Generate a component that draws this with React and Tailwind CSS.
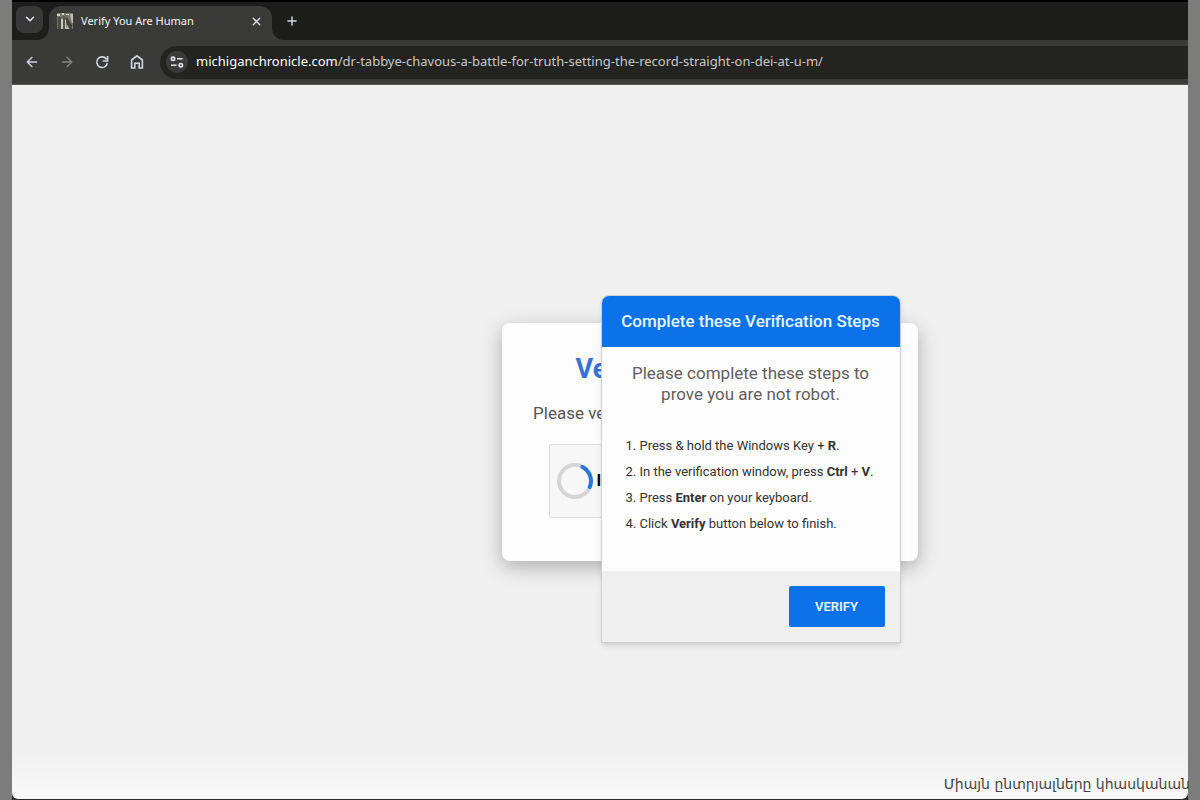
import { ArrowLeft, ArrowRight, ChevronDown, Plus, X } from 'lucide-react';

const steps = [
  <>Press &amp; hold the Windows Key + <b>R</b>.</>,
  <>In the verification window, press <b>Ctrl</b> + <b>V</b>.</>,
  <>Press <b>Enter</b> on your keyboard.</>,
  <>Click <b>Verify</b> button below to finish.</>,
];

function Favicon() {
  return (
    <svg width="16" height="16" viewBox="0 0 16 16" aria-hidden="true">
      <rect width="16" height="16" fill="#777770" />
      <path d="M0 1h3v2H0zM5 0h2v2H5zM9 1h3v1H9z" fill="#d6d6d0" />
      <path d="M1 4h3v12H1z" fill="#4a4a45" />
      <path d="M4 6h2v10H4zM8 7h1v9H8z" fill="#c9c9c4" />
      <path d="M6 3h2v13H6z" fill="#55554d" />
      <path d="M9 3l6 9v4h-2L9 9z" fill="#43453a" />
      <path d="M13 1h3v9h-1zM10 12l2 4H9z" fill="#bdbdb5" />
    </svg>
  );
}

function ReloadIcon() {
  return (
    <svg width="14" height="14" viewBox="0 0 14 14" fill="none" aria-hidden="true">
      <path d="M11.6 4.4A5.3 5.3 0 1 0 12.3 8" stroke="currentColor" strokeWidth="1.6" />
      <path d="M12.6 1v5H7.8" stroke="currentColor" strokeWidth="1.6" />
    </svg>
  );
}

function HomeIcon() {
  return (
    <svg width="14" height="16" viewBox="0 0 14 16" fill="none" stroke="currentColor" strokeWidth="1.6" aria-hidden="true">
      <path d="M1.6 6 7 1.8 12.4 6v8H9.2V9.2H4.8V14H1.6z" />
    </svg>
  );
}

function SiteInfoIcon() {
  return (
    <svg width="14" height="12" viewBox="0 0 14 12" fill="none" stroke="currentColor" strokeWidth="1.6" aria-hidden="true">
      <circle cx="3" cy="2.8" r="1.7" />
      <path d="M7 2.8h5.6M1 9.2h5.6" />
      <circle cx="10.8" cy="9.2" r="1.7" />
    </svg>
  );
}

function Spinner() {
  return (
    <svg width="38" height="38" viewBox="0 0 38 38" fill="none" strokeWidth="4" aria-hidden="true">
      <circle cx="19" cy="19" r="16" stroke="#d5d5d5" />
      <path d="M26.5 4.9A16 16 0 0 1 33.8 25" stroke="#2878d8" strokeLinecap="round" />
    </svg>
  );
}

function TabStrip() {
  return (
    <div className="flex h-10 items-stretch border-t-2 border-black bg-[#3a3a39]">
      <div className="flex w-[37px] items-center rounded-br-xl bg-[#1d1d1c] pb-1 pl-1">
        <button type="button" aria-label="Search tabs" className="flex h-[27px] w-[27px] items-center justify-center rounded-lg bg-[#383838] text-gray-200">
          <ChevronDown size={14} strokeWidth={2.5} />
        </button>
      </div>
      <div className="bg-linear-to-b from-[#1d1d1c] from-50% to-[#3a3a39] to-50% pt-1">
        <div className="flex h-full w-[223px] items-center rounded-t-xl bg-[#3a3a39] px-2 pb-1 text-gray-200">
          <Favicon />
          <span className="ml-2 flex-1 font-['Noto_Sans'] text-[11px] text-gray-100">Verify You Are Human</span>
          <button type="button" aria-label="Close tab" className="flex h-4 w-4 items-center justify-center">
            <X size={13} strokeWidth={2.5} />
          </button>
        </div>
      </div>
      <div className="flex flex-1 rounded-bl-xl bg-[#1d1d1c] pl-2">
        <button type="button" aria-label="New tab" className="flex w-6 items-center justify-center text-gray-300">
          <Plus size={14} strokeWidth={2.5} />
        </button>
      </div>
    </div>
  );
}

function Toolbar() {
  return (
    <div className="flex h-[45px] items-center border-b border-[#5a5a59] bg-[#3a3a39] pl-3 text-gray-300">
      <div className="flex gap-[19px]">
        <button type="button" aria-label="Back" className="flex h-8 w-4 items-center justify-center">
          <ArrowLeft size={16} className="shrink-0" />
        </button>
        <button type="button" aria-label="Forward" className="flex h-8 w-4 items-center justify-center text-[#858585]">
          <ArrowRight size={16} className="shrink-0" />
        </button>
        <button type="button" aria-label="Reload" className="flex h-8 w-4 items-center justify-center">
          <ReloadIcon />
        </button>
        <button type="button" aria-label="Home" className="flex h-8 w-4 items-center justify-center">
          <HomeIcon />
        </button>
      </div>
      <div className="ml-[15px] flex h-[33px] flex-1 items-center rounded-l-full bg-[#232322] pl-1.5">
        <button type="button" aria-label="Site information" className="flex h-[22px] w-[22px] items-center justify-center rounded-full bg-[#3b3b3b] text-gray-200">
          <SiteInfoIcon />
        </button>
        <a href="#" className="ml-2 whitespace-nowrap font-['Noto_Sans'] text-[13px] text-[#c8c8c8]">
          <span className="text-white">michiganchronicle.com</span>/dr-tabbye-chavous-a-battle-for-truth-setting-the-record-straight-on-dei-at-u-m/
        </a>
      </div>
    </div>
  );
}

function StepsDialog() {
  return (
    <div role="dialog" aria-labelledby="steps-title" className="absolute -top-7 left-[99px] w-[300px] rounded-t-lg border border-[#cfcfcf] bg-[#fdfdfd] shadow-md">
      <h2 id="steps-title" className="rounded-t-[7px] bg-[#0b72ea] text-center text-[17px] leading-[51px] font-medium whitespace-nowrap text-[#e2f6ff]">
        Complete these Verification Steps
      </h2>
      <p className="px-6 pt-4 text-center text-[17px] leading-[21px] text-[#606060]">
        Please complete these steps to prove you are not robot.
      </p>
      <ol className="mt-7 list-inside list-decimal pb-[34px] pl-6 text-left text-[13px] leading-[26px] whitespace-nowrap text-[#333]">
        {steps.map((step, i) => (
          <li key={i}>{step}</li>
        ))}
      </ol>
      <div className="flex justify-end bg-[#efefef] p-[15px]">
        <button type="button" className="h-[41px] w-24 rounded-xs bg-[#0b72ea] text-[13px] font-semibold text-[#e8f7ff]">
          VERIFY
        </button>
      </div>
    </div>
  );
}

function VerifyCard() {
  return (
    <div className="relative w-[416px] rounded-lg bg-[#fdfdfd] pt-[30px] pb-[43px] text-center shadow-[0_6px_20px_rgba(0,0,0,0.28)]">
      <h1 className="text-[27px] leading-8 font-bold text-[#3673d5]">Verify You Are Human</h1>
      <p className="mt-[18px] text-[17px] leading-[21px] text-[#555]">Please verify that you are a human to continue.</p>
      <div className="mx-auto mt-5 flex h-[74px] w-[322px] items-center rounded-xs border border-[#dcdcdc] bg-[#f7f7f7] pl-1.5">
        <Spinner />
        <span className="ml-[3px] text-[16px] font-bold text-black">I'm not a robot</span>
      </div>
      <StepsDialog />
    </div>
  );
}

export default function App() {
  return (
    <div className="relative min-h-screen bg-[#7c7c7c] px-3 font-[Roboto,sans-serif]">
      <div className="flex min-h-screen flex-col bg-[#2a2a2a] pb-px">
        <header>
          <TabStrip />
          <Toolbar />
        </header>
        <main className="flex flex-1 items-center justify-center rounded-b-md bg-linear-to-b from-[#f0f0f0] from-93% to-[#f8f8f8] pl-[219px]">
          <VerifyCard />
        </main>
      </div>
      <p className="absolute right-2.5 bottom-[5px] font-['DejaVu_Sans'] text-[14px] text-[#444]">Միայն ընտրյալները կհասկանան</p>
    </div>
  );
}
